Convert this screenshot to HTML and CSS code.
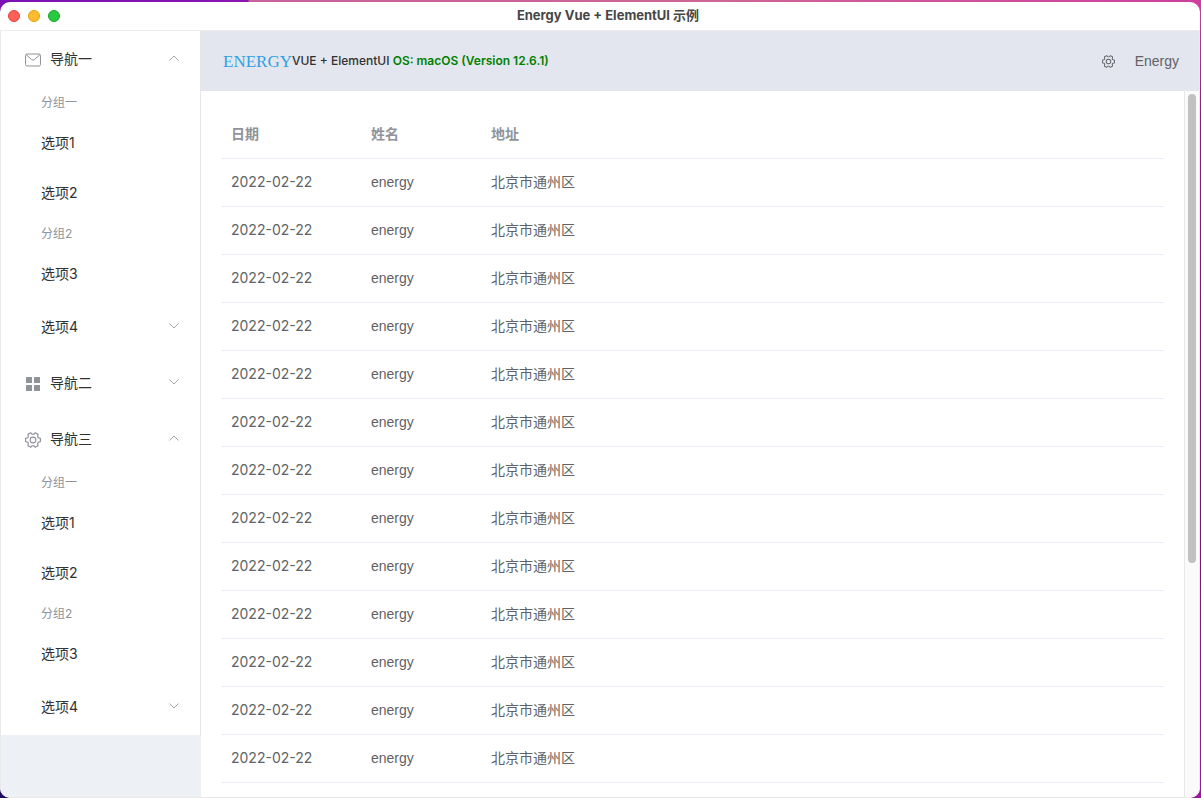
FILE: index.html
```html
<!DOCTYPE html>
<html lang="zh">
<head>
<meta charset="utf-8">
<title>Energy Vue + ElementUI 示例</title>
<link rel="stylesheet" href="styles.css">
</head>
<body>
<svg class="sprite" aria-hidden="true">
  <symbol id="gear" viewBox="64 64 896 896"><path transform="rotate(90 512 512)" d="M600.704 64a32 32 0 0130.464 22.208l35.2 109.376c14.784 7.232 28.928 15.36 42.432 24.512l112.384-24.192a32 32 0 0134.432 15.36L944.32 364.8a32 32 0 01-4.032 37.504l-77.12 85.12a357.12 357.12 0 010 49.024l77.12 85.248a32 32 0 014.032 37.504l-88.704 153.6a32 32 0 01-34.432 15.296L708.8 803.904c-13.44 9.088-27.648 17.28-42.368 24.512l-35.264 109.376A32 32 0 01600.704 960H423.296a32 32 0 01-30.464-22.208L357.696 828.48a351.616 351.616 0 01-42.56-24.64l-112.32 24.256a32 32 0 01-34.432-15.36L79.68 659.2a32 32 0 014.032-37.504l77.12-85.248a357.12 357.12 0 010-48.896l-77.12-85.248A32 32 0 0179.68 364.8l88.704-153.6a32 32 0 0134.432-15.296l112.32 24.256c13.568-9.152 27.776-17.408 42.56-24.64l35.2-109.312A32 32 0 01423.232 64H600.64zm-23.424 64H446.72l-36.352 113.088-24.512 11.968a294.113 294.113 0 00-34.816 20.096l-22.656 15.36-116.224-25.088-65.28 113.152 79.68 88.192-1.92 27.136a293.12 293.12 0 000 40.192l1.92 27.136-79.808 88.192 65.344 113.152 116.224-25.024 22.656 15.296a294.113 294.113 0 0034.816 20.096l24.512 11.968L446.72 896h130.688l36.48-113.152 24.448-11.904a288.282 288.282 0 0034.752-20.096l22.592-15.296 116.288 25.024 65.28-113.152-79.744-88.192 1.92-27.136a293.12 293.12 0 000-40.256l-1.92-27.136 79.808-88.128-65.344-113.152-116.288 24.96-22.592-15.232a287.616 287.616 0 00-34.752-20.096l-24.448-11.904L577.344 128zM512 320a192 192 0 110 384 192 192 0 010-384zm0 64a128 128 0 100 256 128 128 0 000-256z"/></symbol>
  <symbol id="up" viewBox="0 0 12 12"><path d="M1.500 8.500l4.500-4.500 4.500 4.500"/></symbol>
  <symbol id="down" viewBox="0 0 12 12"><path d="M1.500 3.500l4.500 4.500 4.500-4.500"/></symbol>
</svg>
<div class="window">
  <header class="titlebar">
    <div class="lights">
      <button class="light close" aria-label="Close"></button>
      <button class="light minimize" aria-label="Minimize"></button>
      <button class="light zoom" aria-label="Zoom"></button>
    </div>
    <h1 class="title">Energy Vue + ElementUI 示例</h1>
  </header>
  <div class="app">
    <aside class="aside">
      <nav class="menu">
        <button class="submenu"><svg class="icon" viewBox="0 0 16 16"><rect x=".5" y="2" width="15" height="12" rx="1.500"/><path d="M1 2.500l5.500 5Q8 8.800 9.500 7.500l5.500-5"/></svg><span class="label">导航一</span><svg class="arrow"><use href="#up"/></svg></button>
        <h2 class="group">分组一</h2>
        <a class="item" href="#1-1">选项1</a>
        <a class="item" href="#1-2">选项2</a>
        <h2 class="group">分组2</h2>
        <a class="item" href="#1-3">选项3</a>
        <button class="submenu nested"><span class="label">选项4</span><svg class="arrow"><use href="#down"/></svg></button>
        <button class="submenu"><svg class="icon solid" viewBox="0 0 16 16"><rect x="1" y="1" width="6" height="6" rx=".6"/><rect x="9" y="1" width="6" height="6" rx=".6"/><rect x="1" y="9" width="6" height="6" rx=".6"/><rect x="9" y="9" width="6" height="6" rx=".6"/></svg><span class="label">导航二</span><svg class="arrow"><use href="#down"/></svg></button>
        <button class="submenu"><svg class="icon solid"><use href="#gear"/></svg><span class="label">导航三</span><svg class="arrow"><use href="#up"/></svg></button>
        <h2 class="group">分组一</h2>
        <a class="item" href="#3-1">选项1</a>
        <a class="item" href="#3-2">选项2</a>
        <h2 class="group">分组2</h2>
        <a class="item" href="#3-3">选项3</a>
        <button class="submenu nested"><span class="label">选项4</span><svg class="arrow"><use href="#down"/></svg></button>
      </nav>
    </aside>
    <div class="content">
      <div class="header">
        <div class="brand"><span class="logo">ENERGY</span><span class="product">VUE + ElementUI <span class="os">OS: macOS (Version 12.6.1)</span></span></div>
        <div class="user"><button class="settings" aria-label="Settings"><svg class="gear"><use href="#gear"/></svg></button><span>Energy</span></div>
      </div>
      <div class="body">
        <main class="main">
          <table class="table">
            <colgroup><col class="col-date"><col class="col-name"><col></colgroup>
            <thead><tr><th>日期</th><th>姓名</th><th>地址</th></tr></thead>
            <tbody>
              <tr><td>2022-02-22</td><td class="name">energy</td><td>北京市通州区</td></tr>
              <tr><td>2022-02-22</td><td class="name">energy</td><td>北京市通州区</td></tr>
              <tr><td>2022-02-22</td><td class="name">energy</td><td>北京市通州区</td></tr>
              <tr><td>2022-02-22</td><td class="name">energy</td><td>北京市通州区</td></tr>
              <tr><td>2022-02-22</td><td class="name">energy</td><td>北京市通州区</td></tr>
              <tr><td>2022-02-22</td><td class="name">energy</td><td>北京市通州区</td></tr>
              <tr><td>2022-02-22</td><td class="name">energy</td><td>北京市通州区</td></tr>
              <tr><td>2022-02-22</td><td class="name">energy</td><td>北京市通州区</td></tr>
              <tr><td>2022-02-22</td><td class="name">energy</td><td>北京市通州区</td></tr>
              <tr><td>2022-02-22</td><td class="name">energy</td><td>北京市通州区</td></tr>
              <tr><td>2022-02-22</td><td class="name">energy</td><td>北京市通州区</td></tr>
              <tr><td>2022-02-22</td><td class="name">energy</td><td>北京市通州区</td></tr>
              <tr><td>2022-02-22</td><td class="name">energy</td><td>北京市通州区</td></tr>
            </tbody>
          </table>
        </main>
        <div class="scrollbar"><div class="thumb"></div></div>
      </div>
    </div>
  </div>
</div>
</body>
</html>
```
FILE: styles.css
```css
* { box-sizing: border-box; }

body {
  margin: 0;
  height: 100vh;
  padding: 2px 1px 0 0;
  overflow: hidden;
  display: flex;
  font-family: Inter, "Noto Sans CJK SC", sans-serif;
  font-size: 14px;
  color: #303133;
  background:
    linear-gradient(90deg, #7a12b4 0, #8a14b0 248px, #c8609a 249px, #cf6496 60%, #cc3f9f 100%) top / 100% 10px no-repeat,
    linear-gradient(90deg, #1e0a63 50%, transparent 50%),
    linear-gradient(180deg, #cc3f9f 0, #8a1b7b 15%, #76146c 60%, #9a18a0 100%);
}

.sprite { position: absolute; width: 0; height: 0; }

button { border: 0; padding: 0; background: none; font: inherit; color: inherit; }

.window {
  flex: 1;
  min-width: 0;
  display: flex;
  flex-direction: column;
  overflow: hidden;
  border-radius: 10px;
  background: #fff;
}

.titlebar {
  flex: none;
  height: 29px;
  display: grid;
  grid-template-columns: 1fr auto 1fr;
  align-items: center;
  padding: 0 8px;
  border-bottom: 1px solid #ececec;
}
.lights { display: flex; gap: 8px; }
.light { width: 12px; height: 12px; border-radius: 50%; border: 1px solid; }
.close { background: #ff5f57; border-color: #e2463f; }
.minimize { background: #febc2e; border-color: #e1a116; }
.zoom { background: #28c840; border-color: #12ac28; }
.title {
  grid-column: 2;
  margin: 0 0 0 16px;
  padding-bottom: 2px;
  font-size: 13px;
  line-height: 16px;
  font-weight: 700;
  color: #464646;
}

.app {
  flex: 1;
  min-height: 0;
  display: flex;
  border: solid #e9e9e9;
  border-width: 0 1px 1px 1px;
  border-radius: 0 0 10px 10px;
  overflow: hidden;
}

.aside { flex: none; width: 200px; background: #edf0f5; }
.menu { display: flex; flex-direction: column; background: #fff; border-right: 1px solid #e6e6e6; }
.submenu {
  display: flex;
  align-items: center;
  height: 56px;
  padding: 0 20px 2px 24px;
  text-align: left;
}
.nested { padding-left: 40px; }
.label { flex: 1; }
.icon {
  width: 16px;
  height: 16px;
  margin: 4px 9px 0 0;
  fill: none;
  stroke: #909399;
  stroke-width: 1;
}
.solid { fill: #909399; stroke: none; }
.arrow { width: 12px; height: 12px; fill: none; stroke: #a4a6aa; stroke-width: 1; }
.group {
  margin: 0;
  padding: 7px 0 7px 40px;
  font-size: 12px;
  line-height: 17px;
  font-weight: 400;
  color: #909399;
}
.item {
  height: 50px;
  line-height: 50px;
  padding-left: 40px;
  color: inherit;
  text-decoration: none;
}

.content { flex: 1; min-width: 0; display: flex; flex-direction: column; }
.header {
  flex: none;
  height: 60px;
  padding: 0 20px;
  display: flex;
  align-items: center;
  justify-content: space-between;
  background: #e3e6ee;
}
.brand { display: flex; align-items: center; padding-left: 2px; }
.logo { font-family: "Liberation Serif", serif; font-size: 17px; line-height: 20px; padding-top: 2px; color: #2fa0e6; }
.product { font-size: 12px; line-height: 20px; font-weight: 500; white-space: nowrap; }
.os { color: #008000; font-weight: 600; }
.user {
  display: flex;
  align-items: center;
  gap: 20px;
  font-family: "Liberation Sans", sans-serif;
  color: #606266;
}
.settings { display: flex; }
.gear { width: 13px; height: 13px; fill: #606266; }

.body { flex: 1; min-height: 0; display: flex; }
.main { flex: 1; min-width: 0; padding: 20px; overflow: hidden; }
.table { width: 100%; table-layout: fixed; border-collapse: separate; border-spacing: 0; color: #606266; }
.col-date { width: 140px; }
.col-name { width: 120px; }
.table th, .table td {
  height: 48px;
  padding: 0 10px 2px;
  line-height: 23px;
  text-align: left;
  border-bottom: 1px solid #ebeef5;
}
.table th { font-weight: 700; color: #909399; }
.table .name { font-family: "Liberation Sans", sans-serif; padding-bottom: 0; }

.scrollbar { flex: none; width: 15px; padding: 3px; background: #fafafa; border-left: 1px solid #e8e8e8; }
.thumb { width: 8px; height: 67%; border-radius: 4px; background: #c1c1c1; }
```
